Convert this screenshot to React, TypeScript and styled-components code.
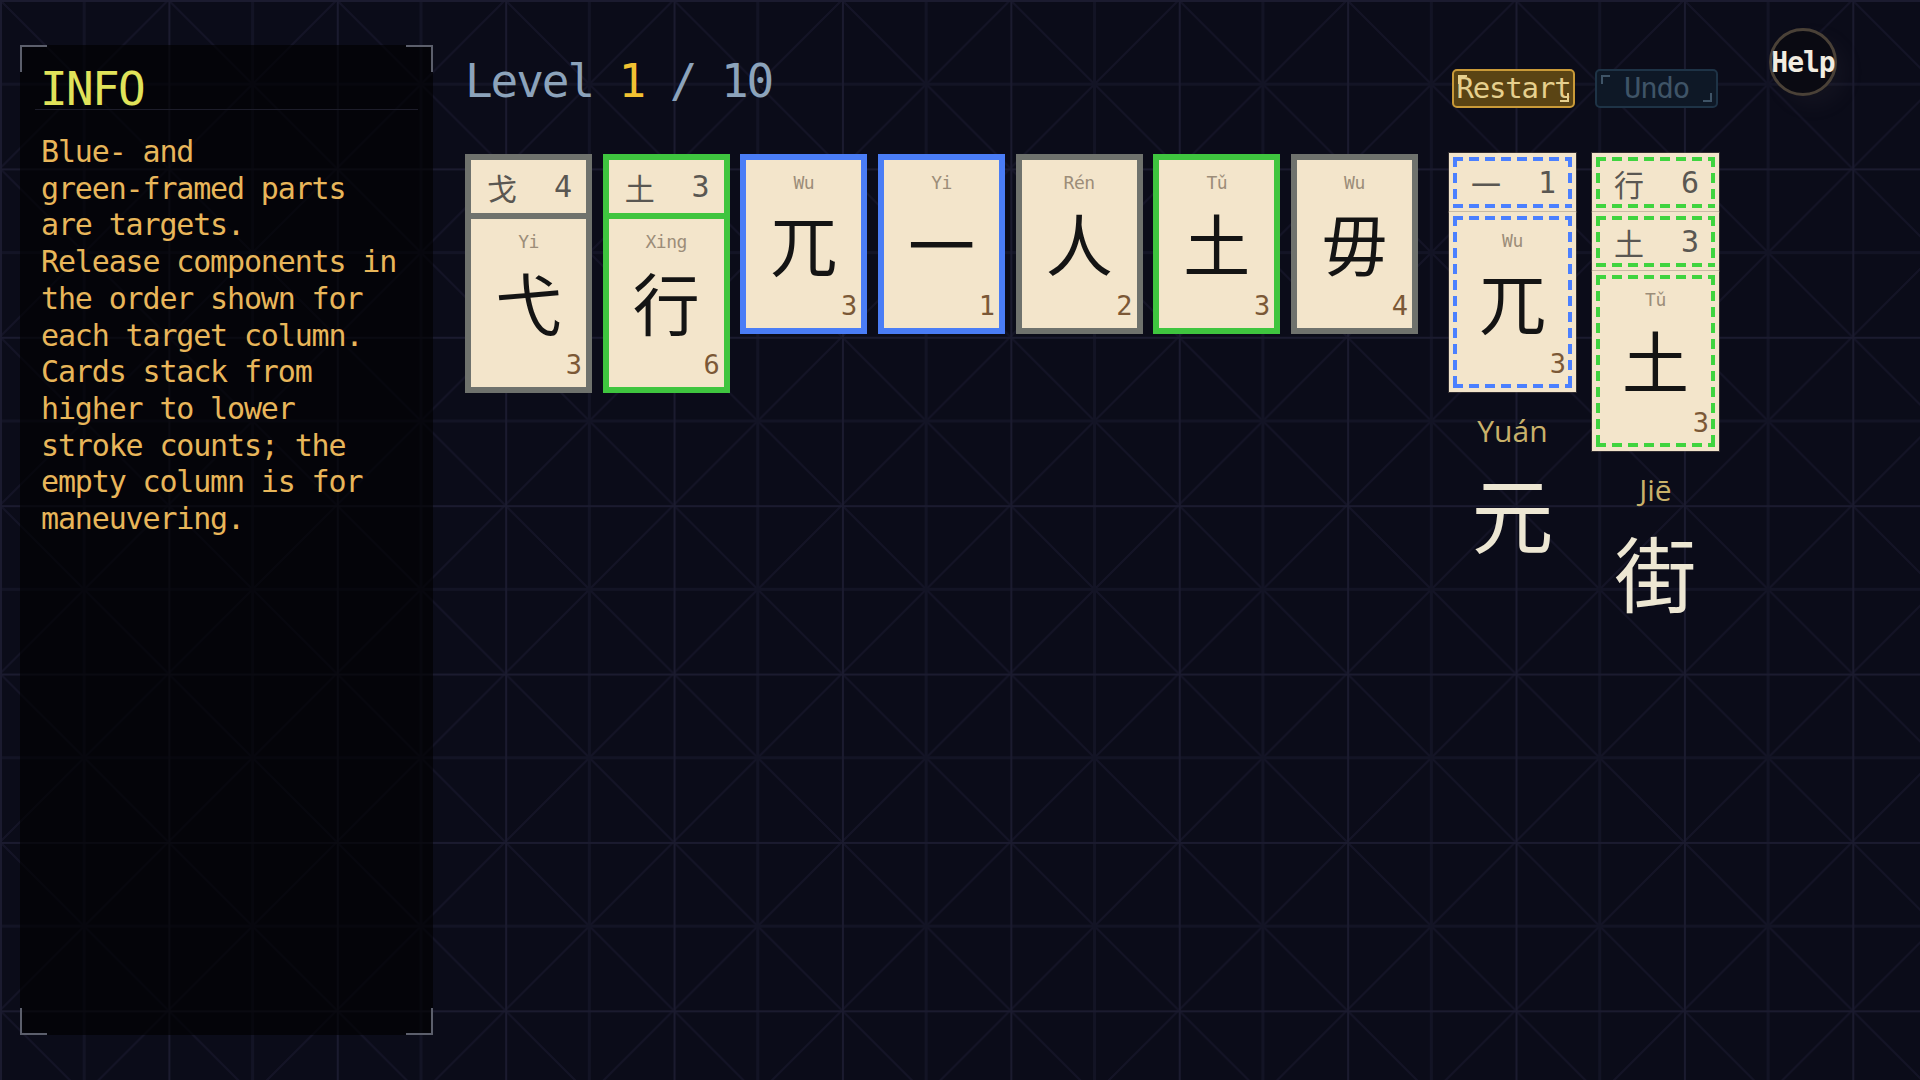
import React from 'react';
import styled, { createGlobalStyle, css } from 'styled-components';

type Tone = 'gray' | 'green' | 'blue';

interface Part {
    char: string;
    strokes: number;
    pinyin: string;
}

interface Pile {
    tone: Tone;
    cards: Part[];
}

interface Target {
    tone: 'green' | 'blue';
    cards: Part[];
    label: string;
    result: string;
}

interface Frame {
    dashed: boolean;
    color: string;
}

const solidColor: Record<Tone, string> = {
    gray: '#6f726d',
    green: '#3fc53f',
    blue: '#4a7df6',
};

const dashColor = {
    green: '#3fd43f',
    blue: '#4b80ff',
};

const CREAM = '#f3e5cb';
const MONO = "'DejaVu Sans Mono', 'Liberation Mono', monospace";
const CJK = "'Noto Sans CJK SC', 'Noto Sans CJK TC', sans-serif";

const piles: Pile[] = [
    {
        tone: 'gray',
        cards: [
            { char: '戈', strokes: 4, pinyin: 'Gē' },
            { char: '弋', strokes: 3, pinyin: 'Yi' },
        ],
    },
    {
        tone: 'green',
        cards: [
            { char: '土', strokes: 3, pinyin: 'Tǔ' },
            { char: '行', strokes: 6, pinyin: 'Xing' },
        ],
    },
    { tone: 'blue', cards: [{ char: '兀', strokes: 3, pinyin: 'Wu' }] },
    { tone: 'blue', cards: [{ char: '一', strokes: 1, pinyin: 'Yi' }] },
    { tone: 'gray', cards: [{ char: '人', strokes: 2, pinyin: 'Rén' }] },
    { tone: 'green', cards: [{ char: '土', strokes: 3, pinyin: 'Tǔ' }] },
    { tone: 'gray', cards: [{ char: '毋', strokes: 4, pinyin: 'Wu' }] },
];

const targets: Target[] = [
    {
        tone: 'blue',
        cards: [
            { char: '一', strokes: 1, pinyin: 'Yi' },
            { char: '兀', strokes: 3, pinyin: 'Wu' },
        ],
        label: 'Yuán',
        result: '元',
    },
    {
        tone: 'green',
        cards: [
            { char: '行', strokes: 6, pinyin: 'Xing' },
            { char: '土', strokes: 3, pinyin: 'Tǔ' },
            { char: '土', strokes: 3, pinyin: 'Tǔ' },
        ],
        label: 'Jiē',
        result: '街',
    },
];

const infoLines = [
    'Blue- and',
    'green-framed parts',
    'are targets.',
    'Release components in',
    'the order shown for',
    'each target column.',
    'Cards stack from',
    'higher to lower',
    'stroke counts; the',
    'empty column is for',
    'maneuvering.',
];

const App: React.FC = () => {
    // every card but the last one in a column is covered, so only its top strip shows
    const renderCards = (cards: Part[], frame: Frame) =>
        cards.map((card, i) =>
            i < cards.length - 1 ? (
                <Strip key={i} $frame={frame}>
                    <StripChar>{card.char}</StripChar>
                    <StripCount>{card.strokes}</StripCount>
                </Strip>
            ) : (
                <Card key={i} $frame={frame}>
                    <Pinyin>{card.pinyin}</Pinyin>
                    <Glyph>{card.char}</Glyph>
                    <Count>{card.strokes}</Count>
                </Card>
            )
        );

    return (
        <>
            <GlobalStyle />
            <Page>
                <InfoPanel>
                    <InfoTitle>INFO</InfoTitle>
                    <InfoBody>
                        {infoLines.map((line) => (
                            <InfoLine key={line}>{line}</InfoLine>
                        ))}
                    </InfoBody>
                </InfoPanel>

                <Main>
                    <Header>
                        <Level>
                            Level <Accent>1</Accent> / 10
                        </Level>
                        <Actions>
                            <ActionButton $variant="restart">Restart</ActionButton>
                            <ActionButton $variant="undo">Undo</ActionButton>
                        </Actions>
                    </Header>

                    <Board>
                        <Piles>
                            {piles.map((pile, i) => (
                                <Column key={i}>
                                    {renderCards(pile.cards, {
                                        dashed: false,
                                        color: solidColor[pile.tone],
                                    })}
                                </Column>
                            ))}
                        </Piles>
                        <Targets>
                            {targets.map((t, i) => (
                                <Column key={i}>
                                    {renderCards(t.cards, {
                                        dashed: true,
                                        color: dashColor[t.tone],
                                    })}
                                    <ResultLabel>{t.label}</ResultLabel>
                                    <ResultChar>{t.result}</ResultChar>
                                </Column>
                            ))}
                        </Targets>
                    </Board>
                </Main>

                <HelpButton>Help</HelpButton>
            </Page>
        </>
    );
};

const GlobalStyle = createGlobalStyle`
    html, body {
        margin: 0;
        padding: 0;
        height: 100%;
        overflow: hidden;
    }
    body {
        background-color: #0b0c19;
        background-image:
            linear-gradient(to right, #1b1b2f 0 2px, transparent 2px),
            linear-gradient(to bottom, #1b1b2f 0 2px, transparent 2px),
            linear-gradient(to right, transparent calc(50% - 1px), #131425 calc(50% - 1px) calc(50% + 1px), transparent calc(50% + 1px)),
            linear-gradient(to bottom, transparent calc(50% - 1px), #131425 calc(50% - 1px) calc(50% + 1px), transparent calc(50% + 1px)),
            linear-gradient(45deg, transparent calc(50% - 1px), #141426 calc(50% - 1px) calc(50% + 1px), transparent calc(50% + 1px)),
            linear-gradient(135deg, transparent calc(50% - 1px), #141426 calc(50% - 1px) calc(50% + 1px), transparent calc(50% + 1px));
        background-size: 168.4px 168.4px;
        font-family: ${MONO};
    }
`;

const Page = styled.div`
    display: flex;
    align-items: flex-start;
    box-sizing: border-box;
    min-height: 100vh;
    padding-left: 20px;
`;

const InfoPanel = styled.aside`
    position: relative;
    box-sizing: border-box;
    width: 413px;
    height: 990px;
    margin-top: 45px;
    padding: 24px 15px;
    background: rgba(0, 0, 0, 0.62);

    &::before {
        content: '';
        position: absolute;
        inset: 0;
        pointer-events: none;
        background:
            linear-gradient(#5c5f6c, #5c5f6c) top left / 27px 2px no-repeat,
            linear-gradient(#5c5f6c, #5c5f6c) top left / 2px 27px no-repeat,
            linear-gradient(#5c5f6c, #5c5f6c) top right / 27px 2px no-repeat,
            linear-gradient(#5c5f6c, #5c5f6c) top right / 2px 27px no-repeat,
            linear-gradient(#5c5f6c, #5c5f6c) bottom left / 27px 2px no-repeat,
            linear-gradient(#5c5f6c, #5c5f6c) bottom left / 2px 27px no-repeat,
            linear-gradient(#5c5f6c, #5c5f6c) bottom right / 27px 2px no-repeat,
            linear-gradient(#5c5f6c, #5c5f6c) bottom right / 2px 27px no-repeat;
    }
`;

const InfoTitle = styled.h2`
    margin: 0;
    padding: 0 0 0 5px;
    font-family: ${MONO};
    font-weight: 400;
    font-size: 46px;
    letter-spacing: -1.7px;
    line-height: 40px;
    color: #e0e35a;
    border-bottom: 1px solid #1d1d2a;
`;

const InfoBody = styled.div`
    margin-top: 24px;
    padding-left: 6px;
    font-family: ${MONO};
    font-size: 30px;
    letter-spacing: -1.15px;
    line-height: 36.7px;
    color: #e8b65a;
`;

const InfoLine = styled.div`
    white-space: nowrap;
`;

const Main = styled.main`
    display: flex;
    flex-direction: column;
    box-sizing: border-box;
    width: 1256px;
    margin-left: 32px;
    padding-top: 58px;
`;

const Header = styled.header`
    display: flex;
    align-items: flex-start;
    justify-content: space-between;
    height: 96px;
    padding-right: 3px;
`;

const Level = styled.h1`
    margin: 0;
    font-family: ${MONO};
    font-weight: 400;
    font-size: 46px;
    letter-spacing: -2.1px;
    line-height: 46px;
    color: #8ca3bb;
    white-space: pre;
`;

const Accent = styled.span`
    color: #f2c232;
`;

const Actions = styled.div`
    display: flex;
    gap: 20px;
    margin-top: 11px;
`;

const ActionButton = styled.button<{ $variant: 'restart' | 'undo' }>`
    position: relative;
    box-sizing: border-box;
    width: 123px;
    height: 39px;
    padding: 0;
    border-radius: 5px;
    font-family: ${MONO};
    font-size: 29px;
    letter-spacing: -1.2px;
    line-height: 35px;
    cursor: pointer;
    ${({ $variant }) =>
        $variant === 'restart'
            ? css`
                  background: #5a4414;
                  border: 2px solid #c99a38;
                  color: #e6d08e;
              `
            : css`
                  background: #0e1826;
                  border: 2px solid #1e3346;
                  color: #3f5467;
              `}

    &::before,
    &::after {
        content: '';
        position: absolute;
        width: 7px;
        height: 7px;
        border-color: currentColor;
        border-style: solid;
        pointer-events: none;
    }
    &::before {
        top: 4px;
        left: 4px;
        border-width: 2px 0 0 2px;
    }
    &::after {
        bottom: 4px;
        right: 4px;
        border-width: 0 2px 2px 0;
    }
`;

const Board = styled.section`
    display: flex;
    align-items: flex-start;
`;

const Piles = styled.div`
    display: flex;
    align-items: flex-start;
    gap: 10.67px;
`;

const Targets = styled.div`
    display: flex;
    align-items: flex-start;
    gap: 16px;
    margin-left: 31px;
    margin-top: -1px;
`;

const Column = styled.div`
    display: flex;
    flex-direction: column;
    align-items: center;
    width: 127px;
`;

const frameStyle = ({ $frame }: { $frame: Frame }) =>
    $frame.dashed
        ? css`
              border: 6px solid ${CREAM};
              box-shadow: 0 0 0 1px rgba(120, 110, 95, 0.35);
              &::before {
                  content: '';
                  position: absolute;
                  inset: -2px;
                  pointer-events: none;
                  background:
                      repeating-linear-gradient(90deg, ${$frame.color} 0 10px, transparent 10px 16px) top left / 100% 4px no-repeat,
                      repeating-linear-gradient(90deg, ${$frame.color} 0 10px, transparent 10px 16px) bottom left / 100% 4px no-repeat,
                      repeating-linear-gradient(180deg, ${$frame.color} 0 10px, transparent 10px 16px) top left / 4px 100% no-repeat,
                      repeating-linear-gradient(180deg, ${$frame.color} 0 10px, transparent 10px 16px) top right / 4px 100% no-repeat;
              }
          `
        : css`
              border: 6px solid ${$frame.color};
          `;

const CardBase = styled.div<{ $frame: Frame }>`
    position: relative;
    box-sizing: border-box;
    width: 127px;
    background: ${CREAM};
    ${frameStyle}
`;

const Strip = styled(CardBase)`
    display: flex;
    align-items: center;
    justify-content: space-between;
    height: 59px;
    padding: 0 14px 0 16px;
    ${({ $frame }) => !$frame.dashed && 'border-bottom: none;'}
`;

const StripChar = styled.span`
    font-family: ${CJK};
    font-size: 30px;
    line-height: 30px;
    color: #5a5752;
`;

const StripCount = styled.span`
    font-family: ${MONO};
    font-size: 30px;
    line-height: 30px;
    color: #5a5752;
`;

const Card = styled(CardBase)`
    display: flex;
    flex-direction: column;
    height: 180px;
`;

const Pinyin = styled.div`
    margin-top: 12px;
    font-family: ${MONO};
    font-size: 18px;
    letter-spacing: -0.5px;
    line-height: 21px;
    text-align: center;
    color: #9c8d79;
`;

const Glyph = styled.div`
    font-family: ${CJK};
    font-size: 67px;
    line-height: 97px;
    text-align: center;
    color: #141414;
`;

const Count = styled.div`
    padding-right: 4px;
    font-family: ${MONO};
    font-size: 27px;
    line-height: 31px;
    text-align: right;
    color: #7b5836;
`;

const ResultLabel = styled.div`
    margin-top: 18px;
    font-family: 'Open Sans', 'DejaVu Sans', sans-serif;
    font-size: 30px;
    line-height: 41px;
    color: #c9b16a;
`;

const ResultChar = styled.div`
    margin-top: 1px;
    font-family: ${CJK};
    font-size: 82px;
    line-height: 119px;
    color: #ede7d3;
`;

const HelpButton = styled.button`
    box-sizing: border-box;
    flex: none;
    width: 68px;
    height: 68px;
    margin-top: 28px;
    margin-left: 48px;
    padding: 0;
    border-radius: 50%;
    border: 3px solid #4a4137;
    background: #0a0a12;
    box-shadow: 10px 10px 22px rgba(150, 140, 130, 0.06);
    font-family: ${MONO};
    font-weight: 700;
    font-size: 28px;
    letter-spacing: -1px;
    color: #f1ece0;
    display: flex;
    align-items: center;
    justify-content: center;
    overflow: visible;
    white-space: nowrap;
    cursor: pointer;
`;

export default App;
